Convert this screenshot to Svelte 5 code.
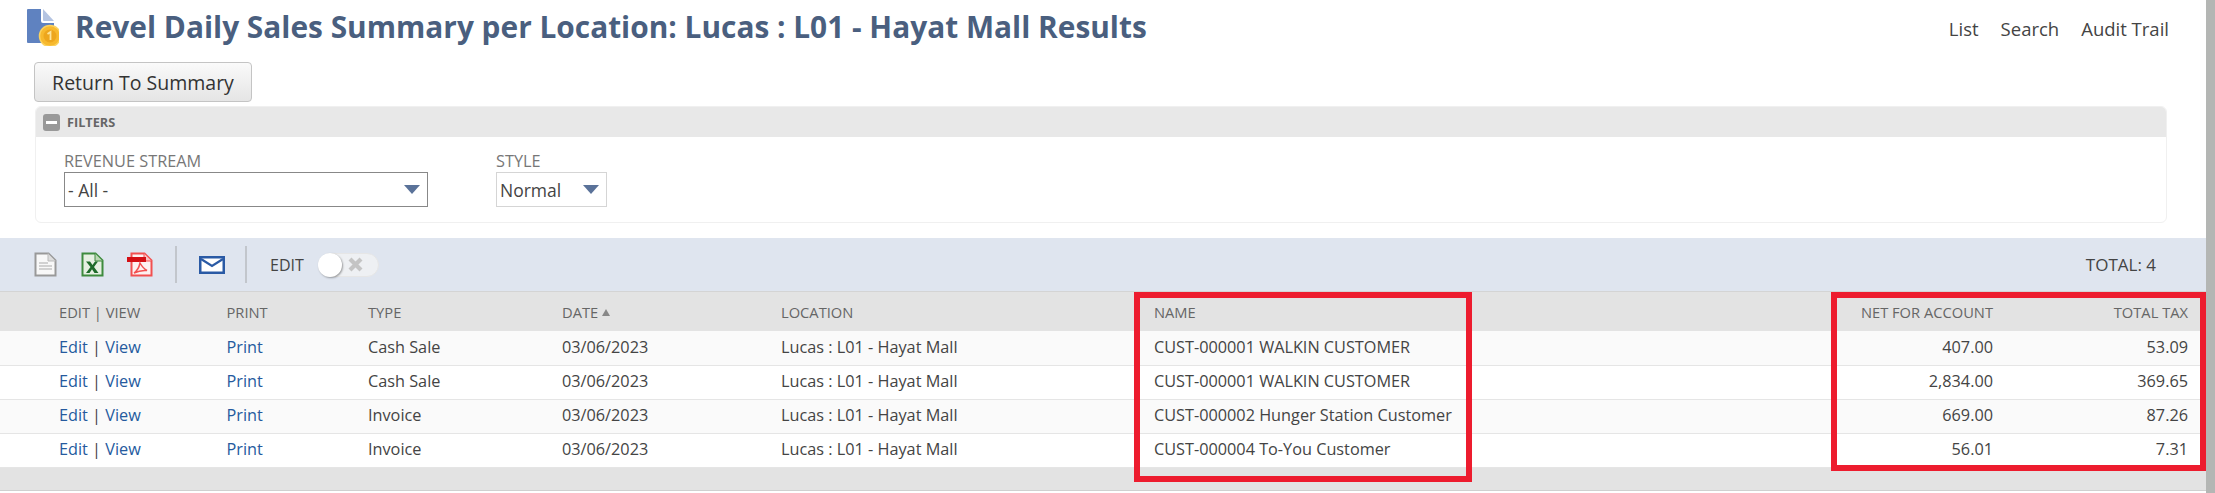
<script lang="ts">
  const columns = [
    { label: "EDIT | VIEW", width: 226.5 },
    { label: "PRINT", width: 141.5 },
    { label: "TYPE", width: 194 },
    { label: "DATE", width: 219, sorted: true },
    { label: "LOCATION", width: 373 },
    { label: "NAME", width: 678 },
    { label: "NET FOR ACCOUNT", width: 161, right: true },
    { label: "TOTAL TAX", width: 0, right: true }
  ];

  const rows = [
    { type: "Cash Sale", name: "CUST-000001 WALKIN CUSTOMER", net: "407.00", tax: "53.09" },
    { type: "Cash Sale", name: "CUST-000001 WALKIN CUSTOMER", net: "2,834.00", tax: "369.65" },
    { type: "Invoice", name: "CUST-000002 Hunger Station Customer", net: "669.00", tax: "87.26" },
    { type: "Invoice", name: "CUST-000004 To-You Customer", net: "56.01", tax: "7.31" }
  ];
</script>

<div class="page">
  <main class="main">
    <header class="title-bar">
      <svg class="record-icon" width="34" height="38" viewBox="0 0 34 38">
        <path d="M2 2q0-1 1-1h13v12q0 2 2 2h11v19q0 1-1 1H3q-1 0-1-1z" fill="#5f82c0" />
        <path d="M18 1l11 12H19q-1 0-1-1z" fill="#b4c4e2" />
        <circle cx="25" cy="28" r="10.5" fill="#f7b92e" stroke="#fbd25e" stroke-width="1.5" />
        <circle cx="25" cy="28" r="6.5" fill="#eda61d" />
        <path d="M22.5 26l3-2v8" fill="none" stroke="#fde49a" stroke-width="1.8" />
      </svg>
      <h1>Revel Daily Sales Summary per Location: Lucas : L01 - Hayat Mall Results</h1>
      <nav class="top-links">
        <span>List</span>
        <span>Search</span>
        <span>Audit Trail</span>
      </nav>
    </header>

    <button class="return-btn">Return To Summary</button>

    <section class="filters">
      <div class="filters-head">
        <span class="collapse"><i></i></span>
        <span>FILTERS</span>
      </div>
      <div class="filters-body">
        <div class="field">
          <span class="field-label">REVENUE STREAM</span>
          <div class="select select-wide">
            <span>- All -</span>
            <b class="caret"></b>
          </div>
        </div>
        <div class="field">
          <span class="field-label">STYLE</span>
          <div class="select select-small">
            <span>Normal</span>
            <b class="caret"></b>
          </div>
        </div>
      </div>
    </section>

    <div class="toolbar">
      <svg class="tool" width="23" height="25" viewBox="0 0 23 25">
        <path d="M1.5 1.5h13l7 7v15h-20z" fill="#f8f8f8" stroke="#999" stroke-width="2" />
        <path d="M14 1.5v7.500h7.500" fill="#ddd" stroke="#bbb" />
        <path d="M5 11h9M5 14h13M5 17h13" stroke="#c4c4c4" stroke-width="1.300" />
      </svg>
      <svg class="tool" width="23" height="25" viewBox="0 0 23 25">
        <path d="M1.500 1.500h13l7 7v15h-20z" fill="#e6f0e2" stroke="#3e8b3e" stroke-width="2" />
        <path d="M14 1.500v7.500h7.500" fill="#bcd8b4" stroke="#3e8b3e" />
        <path d="M5 9.500h4l2.500 3.500 2.500-3.500h3l-4 5.500 4.500 6h-4l-2.500-3.700-2.500 3.700h-3.500l4.500-6z" fill="#1f6b2a" />
      </svg>
      <svg class="tool" width="26" height="25" viewBox="0 0 26 25">
        <path d="M4.500 1.500h13l7 7v15h-20z" fill="#fdf1f1" stroke="#f25050" stroke-width="2" />
        <path d="M17 1.500v7.500h7.500" fill="#f9c4c4" stroke="#f25050" />
        <rect x="0" y="5" width="19" height="5" fill="#d40f14" />
        <path d="M13 11c-1 5-3 8-6 10 4-2 8-3 13-2.500-3-1.500-5-4-7-7.500z" fill="none" stroke="#f25050" stroke-width="1.500" />
      </svg>
      <span class="sep"></span>
      <svg class="mail" width="26" height="18" viewBox="0 0 26 18">
        <rect x="1.250" y="1.250" width="23.500" height="15.500" fill="#fff" stroke="#2a5aa5" stroke-width="2.500" />
        <path d="M2 3l11 7 11-7" fill="none" stroke="#2a5aa5" stroke-width="2.200" />
      </svg>
      <span class="sep sep-b"></span>
      <span class="edit-label">EDIT</span>
      <div class="toggle">
        <span class="knob"></span>
        <svg width="17" height="17" viewBox="0 0 17 17">
          <path d="M3 3l11 11M14 3L3 14" stroke="#c4c4c4" stroke-width="4.200" />
        </svg>
      </div>
      <span class="total">TOTAL: 4</span>
    </div>

    <div class="results">
      <table>
        <colgroup>
          {#each columns as col}
            <col style={col.width ? `width: ${col.width}px` : ""} />
          {/each}
        </colgroup>
        <thead>
          <tr>
            {#each columns as col}
              <th class:right={col.right}>
                {col.label}{#if col.sorted}<span class="sort"></span>{/if}
              </th>
            {/each}
          </tr>
        </thead>
        <tbody>
          {#each rows as row}
            <tr>
              <td><a href="#edit">Edit</a> | <a href="#view">View</a></td>
              <td><a href="#print">Print</a></td>
              <td>{row.type}</td>
              <td>03/06/2023</td>
              <td>Lucas : L01 - Hayat Mall</td>
              <td>{row.name}</td>
              <td class="right">{row.net}</td>
              <td class="right">{row.tax}</td>
            </tr>
          {/each}
        </tbody>
      </table>
      <div class="results-foot"></div>
      <div class="mark mark-name"></div>
      <div class="mark mark-amounts"></div>
    </div>
  </main>
  <div class="scrollbar"></div>
</div>

<style>
  :global(body) {
    margin: 0;
    background: #fff;
  }

  .page {
    display: flex;
    height: 493px;
    overflow: hidden;
    font-family: "Open Sans", sans-serif;
    font-size: 16.25px;
    color: #444;
  }

  .main {
    flex: 1;
    min-width: 0;
    display: flex;
    flex-direction: column;
  }

  .scrollbar {
    width: 9px;
    background: #b4b6b4;
  }

  .title-bar {
    display: flex;
    align-items: flex-start;
    height: 62px;
    padding-left: 25px;
    padding-right: 37px;
    box-sizing: border-box;
  }

  .record-icon {
    margin-top: 8px;
    flex: none;
  }

  h1 {
    margin: 8px 0 0 16px;
    font-size: 29.85px;
    line-height: 38px;
    font-weight: 700;
    color: #4a5f7f;
    white-space: nowrap;
  }

  .top-links {
    margin-left: auto;
    display: flex;
    gap: 22px;
    padding-top: 17px;
    line-height: 24px;
    font-size: 18.5px;
  }

  .return-btn {
    align-self: flex-start;
    margin-left: 34px;
    width: 218px;
    height: 40px;
    padding: 0;
    border: 1px solid #c4c4c4;
    border-radius: 4px;
    background: linear-gradient(#fafafa, #e5e5e5);
    font: 500 19.5px "Open Sans", sans-serif;
    color: #333;
  }

  .filters {
    margin: 4px 39px 0 35px;
    height: 117px;
    box-sizing: border-box;
    border: 1px solid #f0f0f0;
    border-radius: 6px;
    overflow: hidden;
  }

  .filters-head {
    display: flex;
    align-items: center;
    gap: 7px;
    height: 30px;
    padding-left: 7px;
    background: #e8e8e8;
    font-size: 12.7px;
    font-weight: 700;
    color: #666;
  }

  .collapse {
    width: 17px;
    height: 17px;
    border-radius: 3px;
    background: #999;
    display: flex;
    align-items: center;
    justify-content: center;
  }

  .collapse i {
    width: 11px;
    height: 3px;
    background: #fff;
  }

  .filters-body {
    display: flex;
    gap: 68px;
    padding: 13px 0 0 28px;
  }

  .field {
    display: flex;
    flex-direction: column;
  }

  .field-label {
    font-size: 16.3px;
    line-height: 22px;
    color: #777;
  }

  .select {
    display: flex;
    align-items: center;
    justify-content: space-between;
    height: 35px;
    box-sizing: border-box;
    background: #fff;
    font-size: 17.5px;
  }

  .select-wide {
    width: 364px;
    border: 1px solid #888;
    padding: 0 7px 0 3px;
  }

  .select-small {
    width: 111px;
    border: 1px solid #d5d5d5;
    padding: 0 7px 0 3px;
  }

  .caret {
    width: 0;
    height: 0;
    border-left: 8px solid transparent;
    border-right: 8px solid transparent;
    border-top: 9px solid #5a7299;
  }

  .toolbar {
    display: flex;
    align-items: center;
    height: 54px;
    margin-top: 15px;
    padding-left: 34px;
    padding-right: 50px;
    background: #dfe5ef;
    border-bottom: 1px solid #d4d4d4;
    box-sizing: border-box;
    font-size: 16px;
  }

  .tool {
    margin-right: 24px;
    flex: none;
  }

  .tool + .tool + .tool {
    margin-right: 0;
    margin-left: -1px;
  }

  .sep {
    width: 2px;
    height: 37px;
    background: #c2c6cc;
    margin: 0 22px;
  }

  .sep-b {
    margin: 0 23px 0 20px;
  }

  .mail {
    flex: none;
  }

  .edit-label {
    color: #444;
  }

  .toggle {
    position: relative;
    display: flex;
    align-items: center;
    justify-content: flex-end;
    width: 61px;
    height: 24px;
    margin-left: 14px;
    padding-right: 14px;
    box-sizing: border-box;
    border-radius: 12px;
    background: #eef0f3;
    border: 1px solid #e6e6e6;
  }

  .knob {
    position: absolute;
    left: -1px;
    top: -1px;
    width: 24px;
    height: 24px;
    border-radius: 50%;
    background: #fff;
    box-shadow: 1px 1px 2px rgba(0, 0, 0, 0.35);
  }

  .total {
    margin-left: auto;
    font-size: 17px;
  }

  .results {
    position: relative;
    flex: 1;
    display: flex;
    flex-direction: column;
  }

  table {
    width: 100%;
    table-layout: fixed;
    border-collapse: collapse;
  }

  th {
    height: 39px;
    padding: 0;
    background: #e3e3e3;
    font-size: 14.7px;
    font-weight: 400;
    color: #666;
    text-align: left;
  }

  td {
    height: 34px;
    padding: 0 0 2px;
    box-sizing: border-box;
    white-space: nowrap;
    border-bottom: 1px solid #e5e5e5;
  }

  tbody tr:nth-child(odd) td {
    background: #fafafa;
  }

  tr > :first-child {
    padding-left: 59px;
  }

  .right {
    text-align: right;
  }

  tr > :last-child {
    padding-right: 18px;
  }

  .sort {
    display: inline-block;
    margin-left: 4px;
    vertical-align: 2px;
    border-left: 4px solid transparent;
    border-right: 4px solid transparent;
    border-bottom: 7px solid #888;
  }

  a {
    color: #255a9e;
    text-decoration: none;
  }

  .results-foot {
    height: 22px;
    background: #e3e3e3;
    border-bottom: 1px solid #d0d0d0;
  }

  .mark {
    position: absolute;
    top: 0;
    box-sizing: border-box;
    border: 6px solid #ed1c2e;
  }

  .mark-name {
    left: 1134px;
    width: 338px;
    height: 190px;
  }

  .mark-amounts {
    left: 1831px;
    right: 0;
    height: 179px;
  }
</style>
